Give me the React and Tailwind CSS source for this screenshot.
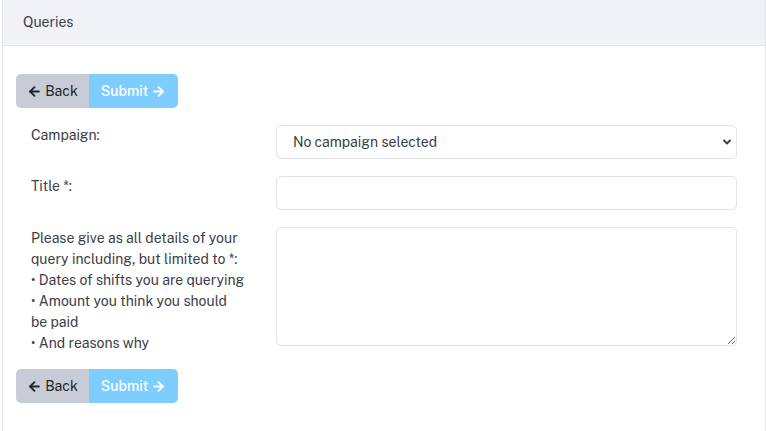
import { ArrowLeft, ArrowRight, ChevronDown } from "lucide-react";

const font = { fontFamily: '"Public Sans", Inter, "Noto Sans", sans-serif' };

function Buttons() {
  return (
    <div className="flex">
      <button
        type="button"
        className="flex items-center gap-[3px] h-[34px] w-[73px] justify-center bg-[#c8ccd6] text-[#212529] text-[14px] rounded-l-[5px]"
      >
        <ArrowLeft size={15} strokeWidth={3} />
        Back
      </button>
      <button
        type="button"
        className="flex items-center gap-[3px] h-[34px] w-[89px] justify-center bg-[#7dcdff] text-white text-[14px] font-medium rounded-r-[5px]"
      >
        Submit
        <ArrowRight size={15} strokeWidth={3} />
      </button>
    </div>
  );
}

export default function App() {
  return (
    <div className="pl-[2px] bg-white min-h-[431px]" style={font}>
      <div className="border-x border-[#e4e6ec] min-h-[431px] text-[#3b4048]">
        <div className="h-[46px] bg-[#f0f2f7] border-b border-[#e2e5ec] flex items-center px-[20px] text-[14px] text-[#3b4048]">
          Queries
        </div>
        <div className="pt-[28px] pl-[13px] pr-[28px]">
          <Buttons />
          <form className="flex flex-col gap-[17px] mt-[17px] pl-[15px]">
            <div className="flex">
              <label className="w-[245px] pt-0 text-[14px]">Campaign:</label>
              <div className="relative flex-1">
                <select className="appearance-none w-full h-[34px] border border-[#e1e4ea] rounded-[5px] pl-[16px] text-[14px] text-[#3b4048] bg-white outline-none">
                  <option>No campaign selected</option>
                </select>
                <ChevronDown
                  size={12}
                  strokeWidth={4}
                  className="absolute right-[4px] top-[11px] text-[#3b4048] pointer-events-none"
                />
              </div>
            </div>
            <div className="flex">
              <label className="w-[245px] pt-0 text-[14px]">Title *:</label>
              <input
                type="text"
                className="flex-1 h-[34px] border border-[#e1e4ea] rounded-[5px] px-[16px] text-[14px] outline-none"
              />
            </div>
            <div className="flex">
              <label className="w-[245px] shrink-0 whitespace-nowrap pt-[1px] text-[14px] leading-[21px]">
                Please give as all details of your
                <br />query including, but limited to *:
                <br />• Dates of shifts you are querying
                <br />• Amount you think you should
                <br />be paid
                <br />• And reasons why
              </label>
              <textarea className="flex-1 h-[119px] border border-[#e1e4ea] rounded-[5px] px-[16px] py-[6px] text-[14px] outline-none" />
            </div>
          </form>
          <div className="mt-[15px]">
            <Buttons />
          </div>
        </div>
      </div>
    </div>
  );
}
